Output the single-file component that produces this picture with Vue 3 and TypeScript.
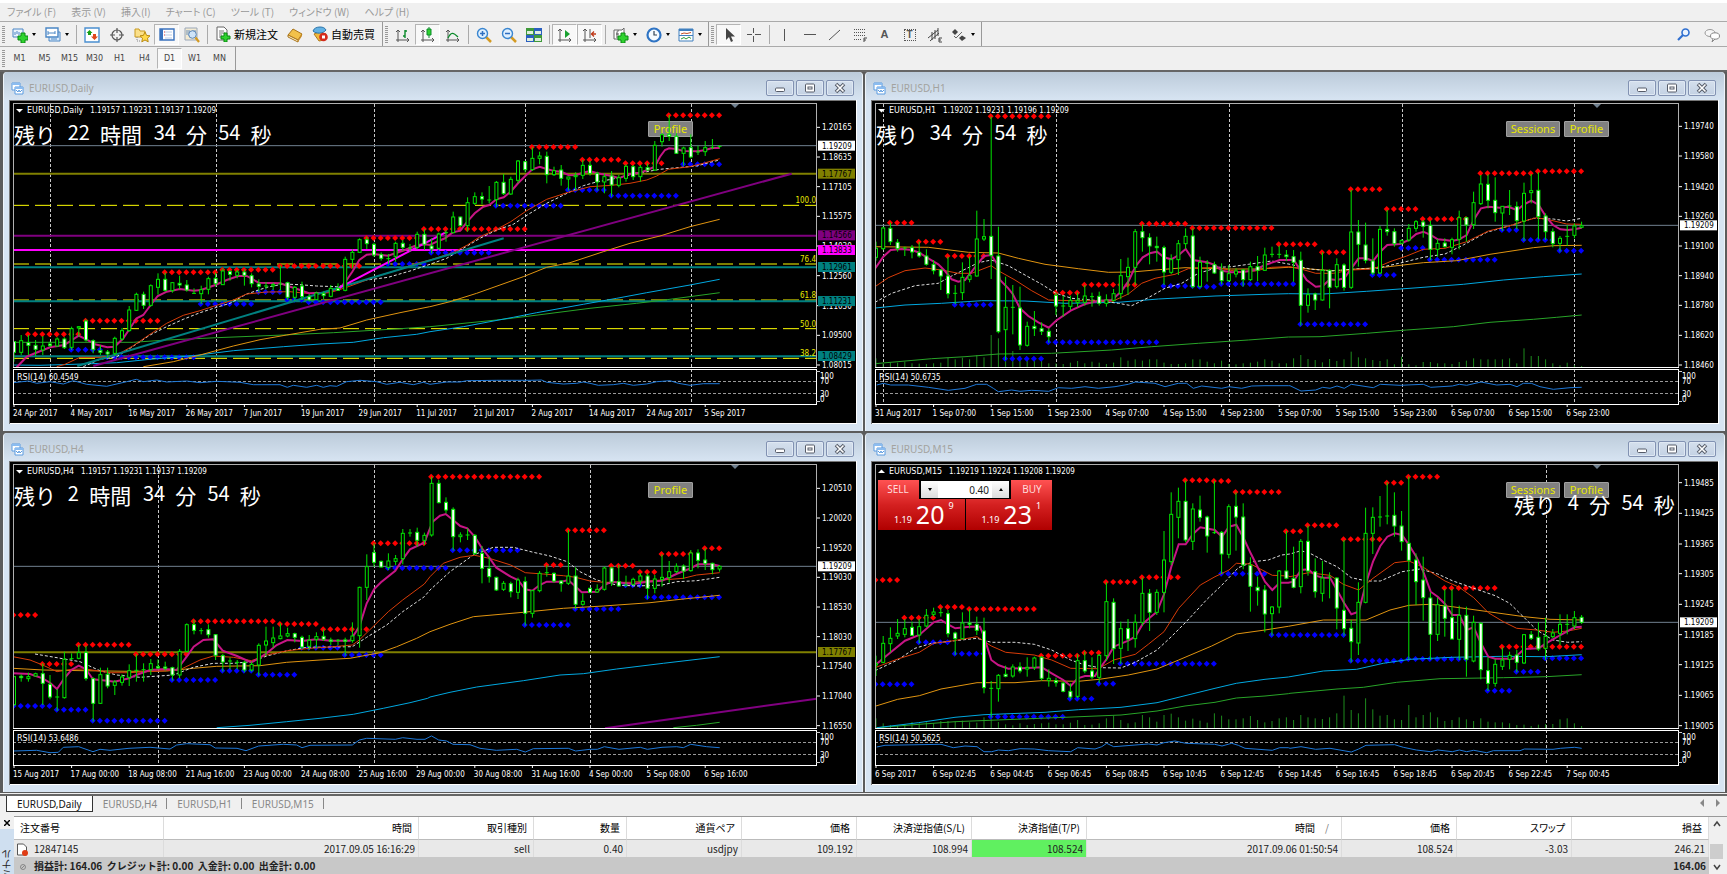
<script setup lang="ts">
type Pt = [number, number]
type Candle = { x: number; high: number; top: number; bottom: number; low: number; filled: boolean }
type Series = { kind: string; points: string }
type Level = { y: number; kind: string }
type Run = [number, number, number]

const LEFT = 14
const STEP = 7.2
const UNIT = 3

const candleX = (i: number): number => LEFT + i * STEP

/* Bars: "high,top,bottom,low", a trailing * marks a falling bar. Values are thirds of a unit below `base`. */
function bars(first: number, base: number, text: string): Candle[] {
  return text.trim().split(/\s+/).map((token, n) => {
    const [high, top, bottom, low] = token.replace('*', '').split(',').map((v) => base + Number(v) / UNIT)
    return { x: candleX(first + n), high, top, bottom, low, filled: token.endsWith('*') }
  })
}

/* A polyline made of pieces, each piece with its own origin. */
function path(kind: string, ...pieces: [number, number, string][]): Series {
  const pts: Pt[] = []
  for (const [ox, oy, text] of pieces) {
    for (const token of text.trim().split(/\s+/)) {
      const [x, y] = token.split(',').map(Number)
      const px = ox + x / UNIT
      if (pts.length && px <= pts[pts.length - 1][0]) continue
      pts.push([px, oy + y / UNIT])
    }
  }
  return { kind, points: pts.map(([x, y]) => `${x.toFixed(1)},${y.toFixed(1)}`).join(' ') }
}

function dots(runs: Run[], base: number): Pt[] {
  return runs.flatMap(([first, y, count]) =>
    Array.from({ length: count }, (_, n): Pt => [candleX(first + n) - 0.5, base + y / UNIT]))
}

function countdown(start: number, drop: number, words: string[]) {
  const EM = 21.5
  let x = start
  return words.map((word) => {
    const digits = /^\d+$/.test(word)
    const item = { word, digits, x, y: (digits ? 140 : 143) + drop }
    x += word.length * (digits ? EM / 2 : EM) + EM / 2
    return item
  })
}

const scale = (base: number, rows: [string, number][]) => rows.map(([label, y]) => ({ label, y: base + y / UNIT }))
const tags = (base: number, rows: [string, number, string][]) => rows.map(([label, y, kind]) => ({ label, kind, y: base + y / UNIT }))
const levels = (base: number, rows: [string, number][]): Level[] => rows.map(([kind, y]) => ({ kind, y: base + y / UNIT }))
const volumes = (base: number, text: string) => text.trim().split(',').map((v, i) => ({ x: candleX(i), y: base + Number(v) / UNIT }))
const hours = (text: string) => text.split('|')

const daily = {
  id: 'daily', title: 'EURUSD,Daily', quote: '1.19157 1.19231 1.19137 1.19209', rsi: '60.4549', panel: false,
  verticals: [50, 216, 374, 525, 691],
  levels: levels(70, [['price', 227], ['olive', 311], ['fib', 406], ['purple', 497], ['magenta', 540], ['fib', 582], ['teal', 592], ['fib', 690], ['teal', 694], ['fib', 776], ['teal', 859], ['fib', 865]]),
  fibs: scale(70, [['100.0', 391], ['76.4', 566], ['61.8', 674], ['50.0', 761], ['38.2', 849]]),
  scale: scale(70, [['1.20165', 172], ['1.18635', 261], ['1.17105', 350], ['1.15575', 439], ['1.14030', 528], ['1.12560', 617], ['1.11030', 707], ['1.09500', 796], ['1.08015', 885]]),
  tags: tags(70, [['1.19209', 227, 'white'], ['1.17767', 311, 'olive'], ['1.14566', 496, 'purple'], ['1.13833', 540, 'magenta'], ['1.12961', 591, 'teal'], ['1.11231', 693, 'teal'], ['1.08429', 858, 'teal']]),
  times: hours('24 Apr 2017|4 May 2017|16 May 2017|26 May 2017|7 Jun 2017|19 Jun 2017|29 Jun 2017|11 Jul 2017|21 Jul 2017|2 Aug 2017|14 Aug 2017|24 Aug 2017|5 Sep 2017'),
  countdown: countdown(14, 0, ['残り', '22', '時間', '34', '分', '54', '秒']),
  pills: [{ label: 'Profile', x: 648, width: 45 }],
  red: dots([[2, 793, 8], [10, 752, 11], [21, 607, 8], [29, 599, 8], [37, 588, 12], [49, 504, 8], [57, 477, 15], [72, 231, 7], [79, 269, 6], [85, 280, 6], [91, 136, 8]], 70),
  blue: dots([[8, 839, 5], [13, 862, 13], [26, 702, 8], [34, 666, 4], [38, 689, 3], [41, 697, 11], [52, 582, 6], [58, 548, 9], [67, 407, 10], [77, 360, 6], [83, 377, 10], [93, 283, 6]], 70),
  volumes: [] as { x: number; y: number }[],
  candles: [
    ...bars(0, 90, `755,755,787,815* 735,752,787,795 735,758,766,795* 750,766,778,798* 738,768,780,795 755,762,767,772* 742,747,768,770 742,747,773,777* 710,716,772,780 708,710,714,740 688,693,750,755* 748,752,778,790* 765,782,787,795* 780,786,792,803* 740,745,790,797 714,722,747,752 648,660,722,725 608,613,661,663 605,613,646,657* 583,587,646,650 550,568,592,614 548,568,601,605* 576,578,602,608 557,580,585,598* 570,585,600,605* 595,610,610,612 587,599,611,642 560,566,598,613 548,565,581,590* 535,543,584,585 540,545,553,572* 540,546,556,565 538,546,556,587* 550,557,581,592* 568,582,589,607* 576,588,588,598 578,584,588,600 527,582,582,600 575,578,622,630* 588,592,622,632 575,588,620,630* 612,620,630,635* 605,609,629,630 605,611,617,627* 585,595,619,622 580,595,601,603* 500,508,601,604 478,487,508,535 445,449,487,488 440,449,461,477* 458,463,495,500* 487,494,505,512* 492,506,506,523 455,460,499,515 450,460,472,483* 462,474,474,485 425,433,472,478 417,433,463,480*`),
    ...bars(58, 70, `505,528,537,550* 488,492,535,540 480,488,488,515 425,441,488,490 440,441,467,470* 382,398,467,485 367,380,400,405 367,380,387,403* 348,390,390,400 333,337,389,410 312,337,371,375* 320,328,372,375 270,273,331,340 273,275,299,307* 232,265,299,303 245,258,265,283 245,259,314,340* 290,302,314,318 285,300,325,347* 320,321,327,362 307,316,320,362 270,286,316,327 273,286,310,317* 305,310,336,362* 310,320,336,370 303,318,345,380* 315,323,346,352 283,289,325,335 285,290,320,330* 285,292,320,335 280,293,300,303* 213,226,300,303 190,194,215,230 135,193,199,213* 190,199,250,252* 230,234,250,287 193,233,261,265* 227,246,246,255 213,233,245,258 207,232,232,238 225,229,229,235`),
  ],
  series: [
    path('green', [0, 90, '40,757 400,757 500,750 650,743 850,735 1000,728 1200,716 1289,710'], [430, 70, '0,770 200,750 300,738 480,715 620,700 720,688 869,668']),
    path('sky', [0, 90, '40,825 120,826 250,822 350,818 450,808 580,797 700,782 850,770 960,762 1060,757 1150,743 1250,733'], [430, 70, '0,785 100,770 250,742 320,728 460,703 560,685 650,668 780,645 869,628']),
    path('orange', [0, 90, '430,830 520,815 600,795 700,768 780,749 860,735 960,718 1020,714 1100,690 1200,668 1289,650'], [430, 70, '0,710 60,695 140,670 280,620 350,592 420,578 520,545 600,520 690,498 780,470 869,448']),
    path('dash', [0, 90, '250,830 300,808 350,800 390,775 450,735 500,710 550,688 600,668 650,652 690,640 740,612 800,592 850,582 900,584 950,588 1010,590 1050,582 1100,570 1165,562 1230,543'], [430, 70, '0,583 50,565 100,535 150,505 200,480 250,463 300,430 350,400 415,368 460,347 502,335 545,328 600,315 650,305 690,298 740,293 800,288 840,277 869,270']),
    path('tomato', [0, 90, '170,830 195,823 240,802 300,802 350,795 400,767 450,733 500,700 550,676 600,662 650,646 700,630 740,612 800,606 870,605 930,611 990,608 1040,592 1100,570 1150,553 1200,538 1250,520'], [430, 70, '0,570 69,548 112,525 150,500 200,478 242,455 290,422 350,388 415,367 480,350 545,346 600,340 650,330 680,318 715,298 780,290 820,280 869,266']),
    path('pink', [0, 90, '50,832 80,800 105,790 150,772 193,765 236,737 262,750 285,763 322,772 344,770 370,745 390,715 410,685 430,675 452,645 473,618 500,605 540,597 581,602 603,600 646,585 680,570 715,558 740,558 776,578 841,580 862,587 900,600 927,610 970,608 1000,600 1020,595 1040,570 1057,545 1078,510 1100,494 1122,492 1143,495 1165,497 1190,488 1215,480 1251,465 1273,463'], [430, 70, '0,525 20,515 45,505 69,487 91,482 112,455 134,430 160,410 178,405 199,388 221,382 242,365 264,340 286,318 307,298 329,290 350,297 372,303 394,305 415,315 437,316 458,308 480,303 502,310 545,318 567,325 588,316 609,310 631,308 652,300 674,290 690,260 705,240 717,235 739,237 760,243 804,244 826,240 847,234 869,234']),
    path('trend-purple', [0, 70, '280,888 2375,311']),
    path('trend-teal', [0, 70, '232,888 1511,505']),
    path('trend-magenta', [0, 70, '1014,655 1337,487']),
  ],
  rsiLine: path('rsi', [0, 90, '40,878 85,873 110,880 150,875 190,882 220,872 260,883 320,889 380,875 409,868 430,875 470,870 500,876 560,873 600,878 650,874 720,877 760,884 840,884 862,892 880,886 920,892 950,886 970,892 990,887 1010,889 1040,875 1080,871 1130,875 1160,883 1200,877 1240,884 1270,877'], [430, 70, '0,943 50,936 90,936 110,932 200,931 300,931 335,930 350,937 400,942 440,940 460,936 480,940 505,946 550,944 580,940 610,946 650,942 680,935 720,932 745,940 780,946 820,941 869,941']),
}

const h1 = {
  id: 'h1', title: 'EURUSD,H1', quote: '1.19202 1.19231 1.19196 1.19209', rsi: '50.6735', panel: false,
  verticals: [21, 194, 367, 540, 712],
  levels: levels(70, [['price', 466]]),
  fibs: scale(70, []),
  scale: scale(70, [['1.19740', 169], ['1.19580', 258], ['1.19420', 350], ['1.19260', 439], ['1.19100', 528], ['1.18940', 617], ['1.18780', 706], ['1.18620', 796], ['1.18460', 885]]),
  tags: tags(70, [['1.19209', 466, 'white']]),
  times: hours('31 Aug 2017|1 Sep 07:00|1 Sep 15:00|1 Sep 23:00|4 Sep 07:00|4 Sep 15:00|4 Sep 23:00|5 Sep 07:00|5 Sep 15:00|5 Sep 23:00|6 Sep 07:00|6 Sep 15:00|6 Sep 23:00'),
  countdown: countdown(14, 0, ['残り', '34', '分', '54', '秒']),
  pills: [{ label: 'Sessions', x: 644, width: 54 }, { label: 'Profile', x: 702, width: 45 }],
  red: dots([[2, 458, 4], [6, 515, 4], [10, 558, 6], [16, 139, 9], [25, 668, 4], [29, 644, 8], [37, 461, 7], [44, 474, 12], [56, 523, 6], [62, 547, 4], [66, 358, 5], [71, 417, 5], [76, 447, 7], [84, 310, 8], [92, 304, 7]], 70),
  blue: dots([[11, 704, 6], [18, 866, 6], [24, 817, 16], [40, 648, 5], [45, 650, 3], [48, 642, 11], [59, 763, 10], [69, 615, 4], [73, 534, 4], [77, 569, 10], [87, 480, 3], [90, 510, 5], [95, 542, 4]], 70),
  volumes: volumes(70, '865,880,877,878,875,880,881,882,880,878,863,868,863,868,855,862,795,805,845,843,858,862,872,868,880,880,882,878,873,880,875,878,882,878,862,872,868,872,868,868,878,882,882,880,868,868,875,880,872,882,883,880,878,875,868,872,880,880,865,855,867,870,877,867,873,868,845,862,865,870,873,868,883,860,883,886,876,876,880,880,882,876,872,865,868,868,868,868,865,880,835,858,858,868,880,886,878,886,888'),
  candles: bars(0, 70, `515,535,562,572 470,474,536,540 458,475,515,525* 507,517,536,545* 530,534,534,558 525,533,546,565* 515,547,558,563* 538,558,583,587* 570,583,602,613* 597,600,618,660* 560,618,671,685* 645,670,670,703 577,622,668,690 560,617,628,637 422,507,618,620 447,500,507,513 140,499,556,627* 470,558,785,790* 620,712,779,870 645,712,712,793 650,714,825,840* 755,769,826,830 723,769,776,798* 757,776,784,795* 775,784,800,818* 668,676,708,735* 677,708,708,740 677,691,709,720 668,691,697,712 645,678,697,707 668,680,680,710 665,679,700,707* 673,690,700,710 657,671,691,695 567,617,671,688 563,592,620,675 477,485,592,645 463,485,503,545* 490,503,528,583* 500,529,533,575* 527,533,606,645* 553,569,607,612 510,521,569,615 475,499,521,537 475,498,650,655* 560,577,649,655 570,580,580,635 575,584,609,612* 580,603,632,643* 585,611,632,635 595,603,612,622 597,600,629,650* 575,590,629,633 558,590,601,633* 533,555,601,603 530,553,553,562 527,553,553,565 540,555,560,573* 540,560,577,635* 545,571,706,767* 655,674,706,728 668,672,690,720* 547,601,690,692 598,601,652,715* 565,584,650,655 580,585,652,662* 360,486,652,657 450,486,523,590* 458,525,571,580* 505,573,609,615* 468,478,609,612 420,478,485,497* 475,485,521,530* 508,512,520,523 462,475,510,515 450,455,475,485 450,456,469,503* 452,466,538,570* 507,520,538,560 505,519,530,533* 503,509,532,553 422,443,508,538 440,443,465,515* 365,398,464,477 315,342,401,405 313,343,391,415* 322,391,428,455* 408,409,429,483 360,408,408,435 395,410,452,478* 338,370,453,513 312,362,368,400 307,361,440,508* 430,438,485,510* 475,485,521,532* 498,505,520,545 465,499,499,528 460,468,496,505 455,467,472,475`),
  series: [
    path('green', [3, 70, '30,881 200,866 300,860 400,852 560,850 740,840 860,830 1000,820 1150,810 1270,801'], [428, 70, '0,801 90,800 230,790 350,780 490,770 600,757 730,748 800,742 875,735']),
    path('sky', [3, 70, '30,714 120,705 230,700 350,692 480,693 600,700 760,697 880,687 1050,678 1200,673 1270,671'], [428, 70, '0,671 100,672 230,664 360,655 520,643 640,630 760,620 875,612']),
    path('orange', [3, 70, '30,530 190,532 310,547 400,549 460,565 540,583 640,596 730,607 800,606 870,600 960,593 1100,597 1180,597 1270,592'], [428, 70, '0,592 60,597 130,602 200,597 280,592 400,578 500,572 600,553 730,533 790,527 875,526']),
    path('dash', [3, 70, '30,697 80,670 150,647 220,640 260,618 300,598 340,578 379,570 430,587 480,615 530,643 573,670 620,685 700,692 760,700 800,707 850,683 900,655 950,640 1000,610 1060,592 1100,590 1150,583 1220,573'], [428, 70, '0,583 60,597 120,603 200,597 260,595 340,577 400,562 465,552 520,525 590,487 660,467 730,445 790,447 830,453 875,445']),
    path('tomato', [3, 70, '30,650 70,623 120,602 180,594 230,600 280,610 320,610 379,587 400,602 450,630 500,662 551,690 620,692 680,692 740,695 790,672 830,640 870,625 930,613 970,596 1050,592 1120,605 1170,603 1220,592 1270,590'], [428, 70, '0,590 33,597 77,610 130,610 184,600 249,597 300,575 350,558 400,538 465,535 530,515 595,483 660,467 703,453 740,443 780,450 830,462 875,463']),
    path('pink', [3, 70, '30,596 55,560 77,540 110,537 141,540 163,548 190,565 220,583 240,603 260,628 280,635 300,630 320,605 335,585 357,558 379,555 395,580 405,630 430,655 443,672 465,715 490,738 520,757 551,773 573,752 617,722 660,702 703,692 740,690 768,665 790,635 811,590 833,562 854,550 876,545 897,562 919,568 941,555 962,537 984,570 1027,577 1049,585 1071,602 1100,607 1136,606 1170,600 1200,585 1244,570 1270,570'], [428, 70, '12,570 33,605 50,630 77,650 98,648 120,628 141,630 163,625 184,595 206,565 228,565 249,573 271,545 292,525 330,522 357,510 379,492 400,485 422,495 443,508 465,510 487,513 508,508 530,495 551,450 573,415 595,410 630,413 655,410 681,420 703,403 724,392 746,405 768,440 789,465 811,478 833,480 854,478 875,473']),
  ],
  rsiLine: path('rsi', [3, 70, '35,945 55,940 77,945 130,945 190,952 250,961 300,955 335,943 365,943 385,955 400,965 440,960 465,964 500,961 551,964 580,953 620,955 660,950 700,955 750,950 790,943 811,936 870,940 900,950 940,940 965,940 985,955 1010,948 1070,955 1092,950 1130,955 1160,948 1200,947 1270,947'], [428, 70, '0,947 33,963 77,960 98,952 120,955 141,948 163,955 184,943 250,953 271,943 330,946 400,943 422,952 487,948 508,943 530,946 573,936 620,945 660,943 681,950 700,940 724,940 750,950 790,958 840,953 875,952']),
}

const h4 = {
  id: 'h4', title: 'EURUSD,H4', quote: '1.19157 1.19231 1.19137 1.19209', rsi: '53.6486', panel: false,
  verticals: [158, 374, 590],
  levels: levels(69, [['price', 409], ['olive', 667]]),
  fibs: scale(69, []),
  scale: scale(69, [['1.20510', 175], ['1.20020', 264], ['1.19520', 353], ['1.19030', 442], ['1.18530', 531], ['1.18030', 620], ['1.17540', 709], ['1.17040', 798], ['1.16550', 887]]),
  tags: tags(69, [['1.19209', 409, 'white'], ['1.17767', 666, 'olive']]),
  times: hours('15 Aug 2017|17 Aug 00:00|18 Aug 08:00|21 Aug 16:00|23 Aug 00:00|24 Aug 08:00|25 Aug 16:00|29 Aug 00:00|30 Aug 08:00|31 Aug 16:00|4 Sep 00:00|5 Sep 08:00|6 Sep 16:00'),
  countdown: countdown(14, 0, ['残り', '2', '時間', '34', '分', '54', '秒']),
  pills: [{ label: 'Profile', x: 648, width: 45 }],
  red: dots([[0, 555, 4], [4, 702, 5], [9, 644, 8], [17, 673, 8], [25, 574, 12], [37, 582, 6], [43, 598, 7], [50, 340, 8], [58, 140, 16], [74, 405, 3], [77, 301, 6], [83, 407, 4], [87, 426, 3], [90, 372, 5], [96, 355, 3]], 69),
  blue: dots([[0, 828, 6], [6, 839, 5], [11, 872, 11], [22, 750, 7], [29, 722, 5], [34, 734, 6], [40, 653, 6], [46, 675, 6], [52, 414, 9], [61, 361, 10], [71, 585, 7], [78, 537, 7], [85, 466, 3], [88, 502, 11]], 69),
  volumes: [] as { x: number; y: number }[],
  candles: bars(0, 69, `738,740,824,828 733,739,743,755* 728,740,746,755 728,731,738,740 700,731,760,825* 735,763,801,808* 777,801,801,843 665,688,803,806 670,686,686,690 645,668,685,688 647,667,745,752* 742,746,820,875* 713,734,820,822 713,733,768,775* 750,756,766,795 733,741,757,767 703,722,742,768 673,721,721,755 700,719,719,755 687,701,719,735 688,710,714,718* 695,711,715,722* 710,713,735,752* 657,664,735,745 580,584,664,668 570,584,601,613* 594,602,602,613 583,599,614,623* 612,614,676,690* 672,677,696,725* 682,693,693,718 690,697,697,718 692,697,720,727* 695,703,720,725 640,646,705,737 590,633,645,678 590,624,638,653 580,618,626,628 593,611,618,622 608,611,622,637* 617,622,651,657* 615,631,649,660 607,620,628,655 598,619,628,633* 623,630,634,645* 627,631,631,645 623,630,634,677* 577,618,632,638 470,472,617,653 373,410,472,510 340,368,397,410* 392,394,411,413* 370,393,412,420 375,386,394,405 297,310,386,403 297,309,309,320 293,307,331,350* 308,316,331,345 140,160,315,320 150,160,218,220* 202,217,240,250* 232,238,320,362* 307,315,320,337 295,315,315,330 312,316,370,375* 348,370,415,460* 380,415,440,458* 440,442,480,483* 453,460,478,483 455,461,485,502* 443,450,487,507 440,455,550,587* 480,482,550,563 423,430,482,487 405,428,428,440 427,430,453,458* 450,453,461,485* 300,438,460,465 412,438,523,538* 490,514,523,527 473,475,487,490* 463,478,486,488 410,414,478,482 410,414,456,468* 405,455,468,470* 437,465,465,470 443,448,463,467 430,438,453,467 430,438,475,507* 435,447,475,490 373,442,448,470 393,425,443,458 400,409,425,430 403,408,423,447* 360,369,422,425 358,369,391,415* 355,390,401,420* 398,400,419,433* 405,409,417,425`),
  series: [
    path('trend-purple', [430, 69, '525,895 1160,806']),
    path('green', [430, 69, '730,893 800,886 869,877']),
    path('sky', [0, 69, '650,893 750,886 860,875 960,865 1060,853 1150,835 1230,818 1283,805'], [430, 69, '0,801 60,787 140,771 280,752 390,735 460,731 560,717 700,700 869,680']),
    path('orange', [0, 69, '39,715 130,720 250,722 387,724 500,723 580,715 650,709 780,707 860,697 960,690 1050,685 1140,668 1190,650 1250,625'], [430, 69, '0,605 60,583 130,560 280,547 400,535 520,528 660,518 760,507 869,496']),
    path('dash', [0, 69, '105,672 171,683 240,695 300,722 350,735 420,742 520,735 580,712 640,700 700,700 754,695 800,678 862,662 920,652 1057,650 1100,622 1160,585 1208,545 1273,500'], [430, 69, '0,480 60,425 130,375 190,352 250,352 310,367 360,378 412,395 450,425 500,450 560,465 620,468 696,465 740,455 800,452 869,442']),
    path('tomato', [0, 69, '39,680 90,690 128,705 171,725 214,718 257,717 330,728 387,728 480,723 538,720 600,690 640,678 700,682 754,692 800,675 862,662 930,655 1000,650 1057,645 1078,630 1122,587 1165,545 1208,510 1273,462'], [430, 69, '0,440 40,400 90,382 134,376 178,385 242,405 286,428 340,432 400,437 437,442 480,453 520,457 600,457 696,450 760,445 800,435 869,428']),
    path('pink', [0, 69, '39,730 90,732 128,745 150,758 171,777 193,745 214,720 236,707 257,717 279,748 322,752 344,755 387,745 409,735 450,720 495,717 530,720 560,680 581,650 610,630 640,628 668,662 711,678 754,697 776,685 800,670 830,645 862,630 906,633 949,628 992,632 1050,632 1078,590 1100,520 1122,478 1143,457 1186,422 1208,388 1230,358 1273,338'], [430, 69, '8,275 30,257 47,252 69,270 91,288 112,295 134,320 156,355 178,383 199,413 242,440 264,450 286,478 307,482 329,465 350,455 394,455 415,450 437,470 455,487 502,485 523,465 545,455 609,462 652,455 696,452 739,432 782,415 804,403 847,403 869,408']),
  ],
  rsiLine: path('rsi', [0, 69, '41,963 110,961 150,968 175,967 190,952 236,950 279,965 300,958 330,961 387,955 450,952 510,957 530,945 560,941 630,944 646,954 711,955 738,962 776,948 850,943 890,945 906,953 930,946 1057,945 1078,930 1100,925 1186,928 1208,923 1251,928 1275,928 1294,918'], [430, 69, '5,918 26,930 50,933 69,943 120,944 150,955 199,961 260,958 286,966 310,956 415,955 437,963 480,958 502,958 523,950 567,958 631,952 652,958 696,952 740,950 760,953 782,943 830,950 869,953']),
}

const m15 = {
  id: 'm15', title: 'EURUSD,M15', quote: '1.19219 1.19224 1.19208 1.19209', rsi: '50.5625', panel: true,
  verticals: [684],
  levels: levels(69, [['price', 577]]),
  fibs: scale(69, []),
  scale: scale(69, [['1.19485', 158], ['1.19425', 250], ['1.19365', 342], ['1.19305', 431], ['1.19245', 523], ['1.19185', 614], ['1.19125', 704], ['1.19065', 796], ['1.19005', 887]]),
  tags: tags(69, [['1.19209', 577, 'white']]),
  times: hours('6 Sep 2017|6 Sep 02:45|6 Sep 04:45|6 Sep 06:45|6 Sep 08:45|6 Sep 10:45|6 Sep 12:45|6 Sep 14:45|6 Sep 16:45|6 Sep 18:45|6 Sep 20:45|6 Sep 22:45|7 Sep 00:45'),
  countdown: countdown(652, 9, ['残り', '4', '分', '54', '秒']),
  pills: [{ label: 'Sessions', x: 644, width: 54 }, { label: 'Profile', x: 702, width: 45 }],
  red: dots([[0, 450, 4], [4, 563, 5], [9, 531, 4], [13, 537, 10], [23, 677, 6], [29, 668, 3], [32, 456, 5], [37, 442, 6], [43, 151, 4], [47, 153, 3], [50, 186, 7], [57, 304, 3], [60, 286, 5], [65, 328, 6], [71, 158, 3], [74, 140, 5], [79, 474, 8], [87, 650, 12]], 69),
  blue: dots([[0, 763, 6], [6, 637, 5], [11, 671, 5], [16, 860, 11], [27, 806, 4], [31, 761, 3], [34, 701, 14], [48, 431, 7], [55, 615, 11], [66, 692, 8], [74, 687, 9], [85, 782, 4], [89, 725, 4], [93, 685, 6]], 69),
  volumes: volumes(69, '865,880,885,887,882,876,880,877,880,873,873,875,872,877,878,862,847,876,883,886,880,885,882,880,878,883,883,878,870,885,884,880,865,857,870,880,877,855,862,875,855,851,862,872,866,872,878,850,857,868,868,865,858,870,877,873,865,862,870,855,862,865,867,862,850,797,840,850,805,838,857,855,868,870,825,862,855,847,862,873,870,862,868,873,865,875,877,877,880,885,884,888,884,882,882,868,865,880,888'),
  candles: bars(0, 69, `677,701,705,738 618,640,697,700 592,625,641,667 567,610,618,627 567,596,613,622 575,592,616,618* 567,590,615,640 537,556,588,592 533,546,553,560 533,548,548,560 540,551,611,622* 605,609,626,675* 547,579,626,628 537,579,583,595* 560,583,601,615* 563,603,773,790* 753,775,775,863 732,736,776,815 707,733,739,742* 703,711,738,743 697,711,723,730* 682,712,717,740 680,684,712,720 678,682,745,752* 718,745,751,770 743,752,758,770* 755,759,784,787* 760,784,801,808* 673,692,799,805 665,692,723,730* 682,723,741,747* 672,676,742,760 457,515,677,693 505,517,656,702* 575,596,655,702 567,596,627,663* 553,577,626,653 443,490,577,587 477,490,547,603* 478,487,547,555 303,390,487,547 187,253,395,405 173,214,262,325 152,214,330,337* 220,237,334,360 197,240,262,275* 257,261,318,368* 153,308,308,312 303,307,372,432* 223,230,373,385 187,229,261,362* 220,261,405,418* 382,406,469,545* 440,472,482,527* 465,480,552,607* 528,531,551,617 420,423,531,550 303,423,445,448* 350,445,472,475* 327,334,470,490 287,334,423,437* 385,425,485,503* 393,444,490,515 427,441,441,505 442,444,534,598* 330,541,596,617* 570,595,635,697* 457,517,639,675 233,310,517,520 232,262,310,372 198,261,261,290 157,258,258,283 187,256,288,320* 243,288,335,362* 140,340,391,688* 370,390,455,525* 380,450,503,572* 487,504,613,690* 503,524,613,633 477,528,565,620* 477,563,627,628* 527,556,628,690 530,556,688,740* 557,577,693,697 577,580,719,748* 682,722,760,783* 687,703,760,770 652,690,709,720 665,676,688,718 660,675,697,727* 612,614,699,702 603,614,625,630* 577,622,657,663* 563,619,655,690 597,609,620,625 553,583,610,645 553,583,583,613 543,563,588,597 555,562,577,582*`),
  series: [
    path('green', [3, 69, '35,893 163,883 270,875 450,868 600,862 768,855 876,843 960,828 1050,817 1114,804 1200,798 1270,791'], [428, 69, '0,790 141,777 220,772 320,757 450,746 640,743 768,740 875,734']),
    path('sky', [3, 69, '35,893 160,878 270,862 357,854 540,847 640,839 768,832 876,818 960,797 1050,775 1114,760 1200,748 1270,741'], [428, 69, '0,740 100,723 200,718 280,700 360,688 487,682 640,679 768,680 875,674']),
    path('orange', [3, 69, '30,829 98,808 163,797 228,777 336,758 450,758 530,752 640,754 703,748 790,735 876,717 941,690 1040,648 1114,612 1200,600 1270,589'], [428, 69, '0,588 100,570 228,570 300,540 357,526 420,523 487,530 595,545 703,560 780,568 875,570']),
    path('dash', [3, 69, '30,722 98,690 150,655 200,640 336,625 379,637 450,637 508,643 560,660 617,690 660,705 703,713 768,714 811,697 876,660 919,620 962,577 1027,507 1071,465 1120,413 1165,395 1210,390 1250,375'], [428, 69, '0,372 33,362 60,370 98,390 141,410 184,443 230,453 271,453 336,425 390,417 443,432 487,452 560,478 616,497 659,520 703,563 740,600 789,630 833,637 875,635']),
    path('tomato', [3, 69, '30,713 98,687 163,667 206,640 260,633 336,620 379,648 422,667 508,675 560,690 617,715 700,716 746,690 811,673 850,643 897,605 941,535 1006,465 1050,440 1092,420 1114,400 1157,402 1222,436 1270,438'], [428, 69, '0,440 55,428 120,436 160,463 206,480 249,445 314,398 357,393 400,412 465,453 508,472 551,503 595,548 640,575 680,595 740,600 789,607 833,603 875,595']),
    path('pink', [3, 69, '30,706 77,667 120,632 163,615 206,577 228,570 249,583 271,595 314,590 345,590 357,620 379,690 400,705 430,716 487,714 530,712 560,730 595,750 617,768 638,745 660,738 690,738 703,717 725,687 746,650 790,632 811,620 833,582 854,563 876,545 897,493 919,410 941,343 962,343 984,312 1006,292 1049,300 1071,320 1092,290 1114,284 1136,325 1157,370 1200,455 1222,480 1244,458 1270,458'], [428, 69, '10,455 33,420 55,418 77,437 98,443 120,443 141,480 163,520 184,553 206,545 228,460 249,395 271,348 292,320 314,310 336,315 357,345 379,380 400,425 422,485 443,500 465,522 487,555 508,555 530,600 551,592 573,640 595,680 616,686 670,686 703,657 746,655 768,640 789,628 811,615 854,592 875,590']),
  ],
  rsiLine: path('rsi', [3, 69, '35,951 60,946 228,943 265,953 300,948 336,950 357,965 380,965 400,960 430,962 465,956 508,957 551,962 617,965 638,953 690,957 710,950 725,940 746,950 850,942 876,945 897,938 930,933 962,940 1049,943 1071,948 1100,940 1120,946 1140,955 1222,961 1244,953 1270,953'], [428, 69, '0,955 33,950 77,958 120,955 184,966 206,957 228,946 314,944 340,952 379,960 422,965 443,960 487,965 508,960 530,965 551,961 590,968 610,962 690,962 703,957 789,958 811,955 854,952 875,955']),
}

const charts = [daily, h1, h4, m15]
const menus = ['ファイル (F)', '表示 (V)', '挿入(I)', 'チャート (C)', 'ツール (T)', 'ウィンドウ (W)', 'ヘルプ (H)']
const frames = ['M1', 'M5', 'M15', 'M30', 'H1', 'H4', 'D1', 'W1', 'MN']
const tabs = ['EURUSD,Daily', 'EURUSD,H4', 'EURUSD,H1', 'EURUSD,M15']

type Tool = { icon: string; name: string; kind?: 'menu' | 'on' | 'text' | 'letter' | 'sep' | 'end' }
const SEP: Tool = { icon: '', name: '', kind: 'sep' }
const END: Tool = { icon: '', name: '', kind: 'end' }
const tools: Tool[] = [
  { icon: 'new-chart', name: 'New chart', kind: 'menu' }, { icon: 'profiles', name: 'Profiles', kind: 'menu' }, SEP,
  { icon: 'market', name: 'Market watch' }, { icon: 'data', name: 'Data window' }, { icon: 'navigator', name: 'Navigator' },
  { icon: 'terminal', name: 'Terminal', kind: 'on' }, { icon: 'tester', name: 'Tester' }, SEP,
  { icon: 'order', name: '新規注文', kind: 'text' }, { icon: 'book', name: 'MetaEditor' }, { icon: 'auto', name: '自動売買', kind: 'text' }, END,
  { icon: 'bars', name: 'Bar chart' }, { icon: 'candles', name: 'Candlesticks', kind: 'on' }, { icon: 'line', name: 'Line chart' }, SEP,
  { icon: 'zoom-in', name: 'Zoom in' }, { icon: 'zoom-out', name: 'Zoom out' }, { icon: 'tile', name: 'Tile windows' }, SEP,
  { icon: 'scroll', name: 'Auto scroll', kind: 'on' }, { icon: 'shift', name: 'Chart shift', kind: 'on' }, SEP,
  { icon: 'indicators', name: 'Indicators', kind: 'menu' }, { icon: 'clock', name: 'Periods', kind: 'menu' }, { icon: 'template', name: 'Templates', kind: 'menu' }, END,
  { icon: 'cursor', name: 'Cursor', kind: 'on' }, { icon: 'cross', name: 'Crosshair' }, SEP,
  { icon: 'vline', name: 'Vertical line' }, { icon: 'hline', name: 'Horizontal line' }, { icon: 'trend', name: 'Trendline' },
  { icon: 'fibo', name: 'Fibonacci' }, { icon: 'plain', name: 'A', kind: 'letter' }, { icon: 'boxed', name: 'T', kind: 'letter' },
  { icon: 'channel', name: 'Channel' }, { icon: 'arrows', name: 'Arrows', kind: 'menu' },
]

const columns = [
  { head: '注文番号', value: '12847145', width: 150 },
  { head: '時間', value: '2017.09.05 16:16:29', width: 255 },
  { head: '取引種別', value: 'sell', width: 115 },
  { head: '数量', value: '0.40', width: 93 },
  { head: '通貨ペア', value: 'usdjpy', width: 115 },
  { head: '価格', value: '109.192', width: 115 },
  { head: '決済逆指値(S/L)', value: '108.994', width: 115 },
  { head: '決済指値(T/P)', value: '108.524', width: 115 },
  { head: '時間', value: '2017.09.06 01:50:54', width: 255 },
  { head: '価格', value: '108.524', width: 115 },
  { head: 'スワップ', value: '-3.03', width: 115 },
  { head: '損益', value: '246.21', width: 137 },
]
</script>

<template>
  <div class="app">
    <svg class="symbols" aria-hidden="true">
      <symbol id="i-new-chart" viewBox="0 0 16 16">
        <path d="M1 2h10v8H1z" fill="#eaf3fc" stroke="#4a86c5" /><path d="M3 5v3M5 4v3M7 5v3" stroke="#4a86c5" />
        <path d="M9 6h4v3h3v4h-3v3H9v-3H6V9h3z" fill="#2fd32f" stroke="#0b8a12" />
      </symbol>
      <symbol id="i-profiles" viewBox="0 0 16 16">
        <path d="M4 5h11v9H4z" fill="#dcebfa" stroke="#4a86c5" /><path d="M1 1h12v9H1z" fill="#fff" stroke="#4a86c5" stroke-width="1.4" />
        <path d="M3 4v4M3 6h7M10 4v3M6 12h6" stroke="#4a86c5" />
      </symbol>
      <symbol id="i-market" viewBox="0 0 16 16">
        <path d="M1 1h14v14H1z" fill="#fff" stroke="#4a8fd0" stroke-width="1.4" /><path d="M5.500 3l3 3H7v2H4V6H2.500z" fill="#16a016" />
        <path d="M9 7h3v2.500h2L10.500 13 7 9.500h2z" fill="#e0481c" />
      </symbol>
      <symbol id="i-data" viewBox="0 0 16 16"><circle cx="8" cy="8" r="5" fill="none" stroke="#555" stroke-width="1.2" /><path d="M8 1v5M8 10v5M1 8h5M10 8h5" stroke="#555" stroke-width="1.2" /></symbol>
      <symbol id="i-navigator" viewBox="0 0 16 16">
        <path d="M1 2h4l1 2h5v6H1z" fill="#fbe08a" stroke="#c89a20" /><path d="M3 10v4h3" stroke="#888" stroke-dasharray="1 1" fill="none" />
        <path d="M11 5l1.600 3.400 3.400.4-2.500 2.400.7 3.600L11 13l-3.200 1.800.7-3.600L6 8.800l3.400-.4z" fill="#ffd94a" stroke="#b98a10" />
      </symbol>
      <symbol id="i-terminal" viewBox="0 0 16 16"><path d="M1 2h14v11H1z" fill="#fff" stroke="#3a72bd" stroke-width="1.4" /><path d="M1 2h3v11H1z" fill="#3a72bd" /><path d="M6 5h7M6 8h7M6 11h7" stroke="#b8cbe6" /><path d="M5 5h1M5 8h1" stroke="#d33" /></symbol>
      <symbol id="i-tester" viewBox="0 0 16 16"><path d="M1 1h12v12H1z" fill="#f3ead2" stroke="#9aa7b8" /><path d="M3 3v5M5 3v6M9 3v4M11 3v5" stroke="#6b8fbb" /><circle cx="8.500" cy="7.500" r="3.800" fill="#cfe4f8" stroke="#5a86b8" /><path d="M11.500 10.500L15 15" stroke="#d49a22" stroke-width="2.200" /></symbol>
      <symbol id="i-order" viewBox="0 0 16 16"><path d="M2 1h7l3 3v10H2z" fill="#fff" stroke="#666" /><path d="M4 5h5M4 7h6M4 9h3M4 11h2" stroke="#777" /><path d="M9 7h3v3h3v3h-3v3H9v-3H6v-3h3z" fill="#2fd32f" stroke="#0b8a12" /></symbol>
      <symbol id="i-book" viewBox="0 0 16 16"><path d="M1 8l5-6 9 5-4 6z" fill="#f2c14a" stroke="#a9741a" /><path d="M1 8v2l10 5v-2z" fill="#fff3cf" stroke="#a9741a" /><path d="M11 13v2l4-6V7z" fill="#c98a24" /></symbol>
      <symbol id="i-auto" viewBox="0 0 16 16"><path d="M2 8l5-2 7 2-2 6-5 1z" fill="#f2b93c" stroke="#b07a1a" /><path d="M1 5c1-3 4-4 7-4s5 1 6 3c-3 4-10 4-13 1z" fill="#63b2e4" stroke="#2b74aa" /><circle cx="11.500" cy="11" r="4.300" fill="#d42a1c" /><path d="M10 9.500h3v3h-3z" fill="#fff" /></symbol>
      <symbol id="i-bars" viewBox="0 0 16 16"><path d="M3 3v12M1 13h13M1 5l2-2 2 2M12 11l2 2-2 2" fill="none" stroke="#555" /><path d="M10 3v8M8 9h2M10 4h2" stroke="#0a8a2a" stroke-width="1.400" fill="none" /></symbol>
      <symbol id="i-candles" viewBox="0 0 16 16"><path d="M3 3v12M1 13h13M1 5l2-2 2 2M12 11l2 2-2 2" fill="none" stroke="#555" /><path d="M9 0v11" stroke="#0a8a2a" /><path d="M7 2h4v6H7z" fill="#2fd32f" stroke="#0a8a2a" /></symbol>
      <symbol id="i-line" viewBox="0 0 16 16"><path d="M3 3v12M1 13h13M1 5l2-2 2 2M12 11l2 2-2 2" fill="none" stroke="#555" /><path d="M3 11c3-6 5-6 10-1" fill="none" stroke="#0a8a2a" stroke-width="1.300" /></symbol>
      <symbol id="i-zoom-in" viewBox="0 0 16 16"><path d="M10 10l5 5" stroke="#d49a22" stroke-width="2.500" /><circle cx="6.500" cy="6.500" r="5" fill="#dff0ff" stroke="#3a86d0" stroke-width="1.400" /><path d="M4 6.500h5M6.500 4v5" stroke="#2f6fc0" stroke-width="1.500" /></symbol>
      <symbol id="i-zoom-out" viewBox="0 0 16 16"><path d="M10 10l5 5" stroke="#d49a22" stroke-width="2.500" /><circle cx="6.500" cy="6.500" r="5" fill="#dff0ff" stroke="#3a86d0" stroke-width="1.400" /><path d="M4 6.500h5" stroke="#2f6fc0" stroke-width="1.500" /></symbol>
      <symbol id="i-tile" viewBox="0 0 16 16"><path d="M0 1h8v7H0zM8 8h8v7H8z" fill="#3f9a3a" /><path d="M8 1h8v7H8zM0 8h8v7H0z" fill="#2a5fc0" /><path d="M1 4h6v3H1zM9 4h6v3H9zM1 11h6v3H1zM9 11h6v3H9z" fill="#dfeedf" /></symbol>
      <symbol id="i-scroll" viewBox="0 0 16 16"><path d="M3 2v13M1 13h13M1 4l2-2 2 2M12 11l2 2-2 2" fill="none" stroke="#555" /><path d="M8 3l5 4-5 4z" fill="#18a030" /></symbol>
      <symbol id="i-shift" viewBox="0 0 16 16"><path d="M3 2v13M1 13h13M1 4l2-2 2 2M12 11l2 2-2 2M8 2v9" fill="none" stroke="#555" /><path d="M9 7h5M12 4.500L9.500 7l2.500 2.500" stroke="#c03a1a" stroke-width="1.300" fill="none" /></symbol>
      <symbol id="i-indicators" viewBox="0 0 16 16"><path d="M1 3h8l2-2v11H1z" fill="#fff" stroke="#666" /><path d="M4 11V5c0-1 1-1.500 2-1M3 7h3" stroke="#555" fill="none" /><path d="M8 6h4v3h3v4h-3v3H8v-3H5V9h3z" fill="#2fd32f" stroke="#0b8a12" /></symbol>
      <symbol id="i-clock" viewBox="0 0 16 16"><circle cx="8" cy="8" r="6.500" fill="#f6fbff" stroke="#2f74c4" stroke-width="2.200" /><path d="M8 4v4h3" stroke="#345" fill="none" stroke-width="1.200" /></symbol>
      <symbol id="i-template" viewBox="0 0 16 16"><path d="M1 2h14v12H1z" fill="#fff" stroke="#3f7fbe" /><path d="M1 2h14v2H1zM1 8h14v1H1z" fill="#3f7fbe" /><path d="M3 7l3-1 3 .5 4-1" stroke="#c0502a" fill="none" /><path d="M3 12l3-1.500 2 1.500 3-2 2 1.500" stroke="#2a9a3a" fill="none" /></symbol>
      <symbol id="i-cursor" viewBox="0 0 16 16"><path d="M5 1v12l3-3 2 5 2-1-2-4.500h4z" fill="#444" /></symbol>
      <symbol id="i-cross" viewBox="0 0 16 16"><path d="M7.500 1v5M7.500 9v6M1 7.500h5M9 7.500h6" stroke="#555" /></symbol>
      <symbol id="i-vline" viewBox="0 0 16 16"><path d="M7.500 2v12" stroke="#555" /></symbol>
      <symbol id="i-hline" viewBox="0 0 16 16"><path d="M2 7.500h12" stroke="#555" /></symbol>
      <symbol id="i-trend" viewBox="0 0 16 16"><path d="M2 13L13 3" stroke="#555" /></symbol>
      <symbol id="i-fibo" viewBox="0 0 16 16"><path d="M2 2.500h12M2 5.500h12M2 8.500h12M2 12.500h8" stroke="#555" stroke-dasharray="1 1" /><path d="M12 15v-4h3M12 13h2" stroke="#444" fill="none" /></symbol>
      <symbol id="i-channel" viewBox="0 0 16 16"><path d="M1 11L11 3M3 14l9-8M5 5v8M8 3v9M11 1v8" stroke="#444" /><path d="M15 11h-3v4h3M12 13h2" stroke="#444" fill="none" /></symbol>
      <symbol id="i-arrows" viewBox="0 0 16 16"><path d="M4 2l3 3-3 3-3-3z" fill="#444" /><path d="M3 9l2 2 6-6" stroke="#666" fill="none" /><path d="M11 8.500l4 2.500-4 3-3-3z" fill="#444" /></symbol>
      <symbol id="i-chart" viewBox="0 0 13 13"><path d="M1 1h8v7H1z" fill="#fff" stroke="#5b9be0" /><path d="M1 1h8v2H1z" fill="#8bbcf0" /><path d="M4 5h8v7H4z" fill="#fff" stroke="#5b9be0" /><path d="M4 5h8v2H4z" fill="#8bbcf0" /><path d="M5 8l2 2 1-2 1 2 2-2" stroke="#5b9be0" fill="none" /></symbol>
    </svg>

    <header class="chrome">
      <nav class="menubar" aria-label="Main menu">
        <button v-for="menu in menus" :key="menu" type="button">{{ menu }}</button>
      </nav>
      <div class="toolbar" role="toolbar" aria-label="Standard">
        <i class="grip"></i>
        <template v-for="(tool, n) in tools" :key="n">
          <i v-if="tool.kind === 'sep'" class="sep"></i>
          <template v-else-if="tool.kind === 'end'"><i class="section-end"></i><i class="grip"></i></template>
          <button v-else-if="tool.kind === 'letter'" type="button" class="tool letter"><span :class="tool.icon">{{ tool.name }}</span></button>
          <button v-else type="button" class="tool" :class="tool.kind" :aria-label="tool.name">
            <svg class="icon"><use :href="'#i-' + tool.icon" /></svg>
            <span v-if="tool.kind === 'text'">{{ tool.name }}</span>
            <i v-if="tool.kind === 'menu'" class="caret"></i>
          </button>
        </template>
        <i class="section-end"></i>
        <button type="button" class="tool search" aria-label="Search">
          <svg class="icon" viewBox="0 0 16 16"><circle cx="9.500" cy="5.500" r="3.500" fill="#eaf3ff" stroke="#2f6fd0" stroke-width="1.600" /><path d="M7 8l-5 5" stroke="#2f6fd0" stroke-width="2.200" /></svg>
        </button>
        <button type="button" class="tool chat" aria-label="Messages">
          <svg class="icon" viewBox="0 0 16 16"><ellipse cx="6" cy="6" rx="5" ry="3.500" fill="#f6f6f6" stroke="#999" /><ellipse cx="11" cy="9" rx="4.500" ry="3.200" fill="#fff" stroke="#888" /><path d="M9 12l-1 3 3-3" fill="#fff" stroke="#888" /></svg>
        </button>
      </div>
      <div class="toolbar frames" role="toolbar" aria-label="Timeframes">
        <i class="grip"></i>
        <button v-for="frame in frames" :key="frame" type="button" class="tool" :class="{ on: frame === 'D1' }">{{ frame }}</button>
        <i class="section-end"></i>
      </div>
    </header>

    <main class="desktop">
      <section v-for="chart in charts" :key="chart.id" class="window" :aria-label="chart.title">
        <header class="titlebar">
          <svg class="title-icon"><use href="#i-chart" /></svg>
          <h2>{{ chart.title }}</h2>
          <button type="button" aria-label="Minimize"><svg viewBox="0 0 12 12"><rect x="1.500" y="6" width="9" height="3.500" rx="1" fill="#fff" stroke="#555b68" /></svg></button>
          <button type="button" aria-label="Restore"><svg viewBox="0 0 12 12"><rect x="1.500" y="2" width="9" height="8" rx="1" fill="#fff" stroke="#555b68" /><rect x="4" y="5" width="4" height="2" fill="#fff" stroke="#555b68" /></svg></button>
          <button type="button" aria-label="Close"><svg viewBox="0 0 12 12"><path d="M2 2l8 8M10 2l-8 8" stroke="#555b68" stroke-width="3.600" /><path d="M2.500 2.500l7 7M9.500 2.500l-7 7" stroke="#fff" stroke-width="1.600" /></svg></button>
        </header>
        <svg class="chart" viewBox="10 101 846 322">
          <defs><clipPath :id="'plot-' + chart.id"><rect x="13" y="103" width="804" height="264" /></clipPath></defs>
          <rect x="10" y="101" width="846" height="322" fill="#000" />
          <g class="grid">
            <line v-for="x in chart.verticals" :key="x" :x1="x + 0.5" :x2="x + 0.5" y1="104" y2="403" />
            <line class="bound" x1="13" x2="817" y1="381.500" y2="381.500" /><line class="bound" x1="13" x2="817" y1="393.500" y2="393.500" />
          </g>
          <foreignObject v-for="pill in chart.pills" :key="pill.label" :x="pill.x" y="121" :width="pill.width" height="16">
            <button type="button" class="pill">{{ pill.label }}</button>
          </foreignObject>
          <g :clip-path="`url(#plot-${chart.id})`">
            <line v-for="(v, n) in chart.volumes" :key="n" :x1="v.x" :x2="v.x" :y1="v.y" y2="367" class="volume" />
            <line v-for="(level, n) in chart.levels" :key="n" x1="13" x2="817" :y1="level.y" :y2="level.y" :class="['level', level.kind]" />
            <path v-for="([x, y], n) in chart.red" :key="n" :d="`M${x - 3} ${y}l3 -3l3 3l-3 3z`" fill="#f00" />
            <path v-for="([x, y], n) in chart.blue" :key="n" :d="`M${x - 3} ${y}l3 -3l3 3l-3 3z`" fill="#00f" />
            <polyline v-for="line in chart.series" :key="line.kind" :points="line.points" :class="['series', line.kind]" />
            <g class="candles">
              <template v-for="(c, n) in chart.candles" :key="n">
                <line :x1="c.x" :x2="c.x" :y1="c.high" :y2="c.low" />
                <line v-if="c.top === c.bottom" :x1="c.x - 2" :x2="c.x + 2" :y1="c.top" :y2="c.top" />
                <rect v-else :x="c.x - 1.5" :y="c.top" width="3" :height="c.bottom - c.top" :class="{ filled: c.filled }" />
              </template>
            </g>
          </g>
          <polyline :points="chart.rsiLine.points" class="series rsi" />
          <g class="frame">
            <path d="M13 103.500H817M13.500 103V367.500M816.500 103V367.500" stroke="#b0b0b0" />
            <path d="M13 367.500H817M13 369.500H817M13.500 369V404.500M816.500 369V404.500M13 404.500H817" stroke="#fff" />
            <path d="M816 371.500h4M816 401.500h4" stroke="#ccc" />
          </g>
          <path d="M731 104h8l-4 4z" fill="#708090" />
          <text v-for="fib in chart.fibs" :key="fib.label" x="816" :y="fib.y + 3" class="fib-label">{{ fib.label }}</text>
          <g class="axis">
            <template v-for="row in chart.scale" :key="row.label">
              <line x1="817" x2="820" :y1="row.y" :y2="row.y" />
              <text x="822" :y="row.y + 3">{{ row.label }}</text>
            </template>
            <template v-for="(label, n) in chart.times" :key="label">
              <line :x1="candleX(n * 8)" :x2="candleX(n * 8)" y1="404" y2="407" />
              <text :x="13 + n * 8 * STEP" y="416">{{ label }}</text>
            </template>
            <text x="820" y="379">100</text><text x="820" y="384">70</text><text x="820" y="397">30</text><text x="820" y="402">0</text>
            <text x="17" y="380"><tspan class="wide">RSI(14)</tspan> {{ chart.rsi }}</text>
            <text x="27" y="113"><tspan class="wide">{{ chart.title }}</tspan>&nbsp;&nbsp;&nbsp;{{ chart.quote }}</text>
          </g>
          <path :d="chart.panel ? 'M16 112h7l-3.500 -3.500z' : 'M16 109h7l-3.500 3.500z'" fill="#fff" />
          <g v-for="tag in chart.tags" :key="tag.label" :class="['tag', tag.kind]">
            <rect x="818" :y="tag.y - 5" width="37" height="10" />
            <text x="822" :y="tag.y + 3">{{ tag.label }}</text>
          </g>
          <text v-for="item in chart.countdown" :key="item.x" :x="item.x" :y="item.y" :class="['countdown', { digits: item.digits }]">{{ item.word }}</text>
          <foreignObject v-if="chart.panel" x="16" y="119" width="174" height="50">
            <div class="deal">
              <button type="button"><span class="side">SELL</span><span class="quote"><small>1.19</small><b>20</b><sup>9</sup></span></button>
              <button type="button" class="buy"><span class="side">BUY</span><span class="quote"><small>1.19</small><b>23</b><sup>1</sup></span></button>
              <div class="lots">
                <button type="button" aria-label="Decrease volume"><i class="caret"></i></button>
                <input type="text" value="0.40" aria-label="Volume" />
                <button type="button" aria-label="Increase volume"><i class="caret up"></i></button>
              </div>
            </div>
          </foreignObject>
        </svg>
      </section>
    </main>

    <nav class="tabs" aria-label="Charts">
      <button v-for="(tab, n) in tabs" :key="tab" type="button" :class="{ active: n === 0 }">{{ tab }}</button>
      <span class="tab-scroll">
        <button type="button" aria-label="Scroll left"><svg viewBox="0 0 6 8"><path d="M5 0v8L1 4z" fill="#888" /></svg></button>
        <button type="button" aria-label="Scroll right"><svg viewBox="0 0 6 8"><path d="M1 0v8l4-4z" fill="#888" /></svg></button>
      </span>
    </nav>

    <section class="terminal" aria-label="ターミナル">
      <div class="dock">
        <button type="button" aria-label="Close"><svg viewBox="0 0 6 6"><path d="M0 0l6 6M6 0L0 6" stroke="#000" stroke-width="1.500" /></svg></button>
        <div class="dock-label"><span>ターミナル</span></div>
      </div>
      <div class="history">
        <table>
          <colgroup><col v-for="(col, n) in columns" :key="n" :width="col.width" /></colgroup>
          <thead>
            <tr><th v-for="(col, n) in columns" :key="n" scope="col">{{ col.head }}<span v-if="n === 8" class="sort">/</span></th></tr>
          </thead>
          <tbody>
            <tr>
              <td v-for="(col, n) in columns" :key="n" :class="{ profit: n === 7 }">
                <svg v-if="n === 0" viewBox="0 0 13 13" class="deal-icon"><path d="M1.500 1h6l3 3v8h-9z" fill="#fff" stroke="#555" /><circle cx="9" cy="10" r="3" fill="#e03c14" /></svg>{{ col.value }}
              </td>
            </tr>
            <tr class="total">
              <td colspan="11"><svg viewBox="0 0 13 13" class="deal-icon"><circle cx="7" cy="7" r="2.500" fill="none" stroke="#888" /><path d="M5 9l4-4" stroke="#888" /></svg>損益計: 164.06&nbsp; クレジット計: 0.00&nbsp; 入金計: 0.00&nbsp; 出金計: 0.00</td>
              <td>164.06</td>
            </tr>
          </tbody>
        </table>
        <div class="scrollbar">
          <button type="button" aria-label="Scroll up"><svg viewBox="0 0 8 8"><path d="M1 6l3-4 3 4" fill="none" stroke="#444" stroke-width="1.500" /></svg></button>
          <i class="thumb"></i>
          <button type="button" aria-label="Scroll down"><svg viewBox="0 0 8 8"><path d="M1 2l3 4 3-4" fill="none" stroke="#444" stroke-width="1.500" /></svg></button>
        </div>
      </div>
    </section>
  </div>
</template>

<style>
body { margin: 0; background: #f0f0f0; }
</style>

<style scoped>
.app { min-height: 100vh; display: flex; flex-direction: column; background: #f0f0f0; color: #222; font: 10px/14px "Noto Sans", "Noto Sans CJK JP", sans-serif; }
.app * { box-sizing: border-box; }
button { font: inherit; color: inherit; background: none; border: 0; padding: 0; margin: 0; }
.symbols { position: absolute; width: 0; height: 0; }

.chrome { border-top: 3px solid #fff; border-bottom: 2px solid #666; }
.menubar { display: flex; gap: 15px; height: 18px; padding-left: 7px; color: #999; font-family: "Noto Sans CJK JP", sans-serif; font-feature-settings: "palt"; }
.menubar button { white-space: nowrap; }
.toolbar { display: flex; align-items: stretch; height: 25px; padding: 2px 0 1px; border-top: 1px solid #aaa; }
.frames { height: 24px; padding-top: 1px; font: 8px/12px "DejaVu Sans", sans-serif; color: #444; }
.grip { width: 3px; margin: 2px 2px 2px 2px; background: repeating-linear-gradient(#999 0 1px, #f0f0f0 1px 2px); }
.sep { width: 1px; margin: 1px 2px 1px 3px; background: #aaa; }
.section-end { width: 1px; margin: -2px 0 -1px 3px; background: #999; }
.tool { width: 25px; display: flex; align-items: center; justify-content: center; flex: none; }
.tool.menu { width: 33px; gap: 4px; }
.tool.menu:has(+ .section-end) { width: 31px; }
.tool.text { width: auto; gap: 3px; padding: 0 4px 2px 5px; font: 11px/14px "Noto Sans CJK JP", sans-serif; color: #000; }
.tool.on { background: #f8f8f8; border: 1px solid #b4b4b4; border-right-color: #fff; border-bottom-color: #fff; }
.tool.letter { font: bold 11px/11px "Liberation Sans", sans-serif; color: #555; }
.letter .boxed { width: 12px; height: 12px; border: 1px dotted #555; font-size: 10px; line-height: 10px; }
.tool.search { margin-left: auto; margin-right: 3px; }
.tool.chat { margin-right: 3px; }
.icon { width: 16px; height: 16px; display: block; }
.caret { width: 0; height: 0; border: 2px solid transparent; border-top: 3px solid #000; border-bottom: 0; }
.caret.up { border-top: 0; border-bottom: 3px solid #000; }

.desktop { display: grid; grid-template-columns: 1fr 1fr; gap: 2px; padding: 0 2px 1px 3px; background: #5c5c5c; }
.window { padding: 0 6px 7px; background: #d7e4f2; border-radius: 4px 4px 0 0; border-left: 1px solid #eef4fa; border-right: 1px solid #eef4fa; min-width: 0; }
.titlebar { display: flex; align-items: center; gap: 2px; height: 28px; margin: 0 -6px; padding: 4px 8px 0 7px; background: linear-gradient(#bccbda, #d7e4f2); border-radius: 4px 4px 0 0; }
.titlebar h2 { flex: 1; margin: 0 0 0 3px; font: 10px/14px "Noto Sans", sans-serif; color: #a3a39f; }
.title-icon { width: 13px; height: 13px; }
.titlebar button { width: 28px; height: 16px; border: 1px solid #8292b2; border-radius: 2px; background: linear-gradient(#d5e0ed, #c3d1e3); box-shadow: inset 0 0 0 1px #dfe8f3; display: flex; align-items: center; justify-content: center; }
.titlebar button svg { width: 12px; height: 12px; }
.chart { display: block; width: 100%; height: auto; border-top: 1px solid #777; border-bottom: 1px solid #fff; box-shadow: 1px 0 #fff, -1px 0 #777; }

.grid line { stroke: #c8c8c8; stroke-dasharray: 3 2; }
.grid .bound { stroke: #999; }
.level.price { stroke: #708090; }
.level.olive { stroke: #808000; stroke-width: 2; }
.level.purple { stroke: #800080; stroke-width: 2; }
.level.magenta { stroke: #f0f; stroke-width: 2; }
.level.teal { stroke: #008080; stroke-width: 2; }
.level.fib { stroke: #ff0; stroke-dasharray: 16 6; }
.series { fill: none; stroke-width: 1; }
.pink { stroke: #c71585; stroke-width: 2; }
.tomato { stroke: #d83c08; }
.dash { stroke: #ddd; stroke-dasharray: 3 2; }
.orange { stroke: #e09410; }
.sky { stroke: #00a8e0; }
.green { stroke: #28a428; }
.rsi { stroke: #1e78d8; }
.trend-purple { stroke: #800080; stroke-width: 2; }
.trend-teal { stroke: #008080; stroke-width: 2; }
.trend-magenta { stroke: #f0f; stroke-width: 2; }
.volume { stroke: #1d8a1d; }
.candles { stroke: #00e400; fill: #000; }
.candles .filled { fill: #fff; }
.frame { fill: none; }
.axis { fill: #fff; font: 8px "DejaVu Sans Condensed", "Noto Sans", sans-serif; }
.axis .wide { font-family: "DejaVu Sans", sans-serif; }
.axis line { stroke: #fff; }
.fib-label { fill: #e8e800; text-anchor: end; font: 8px "DejaVu Sans Condensed", "Noto Sans", sans-serif; }
.tag { font: 8px "DejaVu Sans Condensed", "Noto Sans", sans-serif; fill: #000; }
.tag rect { fill: #fff; }
.tag.olive rect { fill: #808000; }
.tag.purple rect { fill: #800080; }
.tag.magenta rect { fill: #f0f; }
.tag.teal rect { fill: #008080; }
.countdown { fill: #fff; font: 21px "Noto Sans CJK JP", sans-serif; }
.countdown.digits { font-size: 20px; }
.pill { display: block; width: 100%; height: 16px; font: 11px/12px "Noto Sans", sans-serif; color: #e8e800; background: #808080; border: 1px solid #a0a0a0; border-radius: 1px; text-align: center; }

.deal { position: relative; display: grid; grid-template-columns: 1fr 1fr; gap: 1px; height: 50px; color: #fff; font: 10px/18px "Noto Sans", sans-serif; }
.deal > button { position: relative; display: flex; flex-direction: column; background: linear-gradient(#ff5252, #d42020 50%, #b00000); }
.side { width: 40px; text-align: center; color: #ffdcdc; height: 19px; }
.buy .side { align-self: flex-end; }
.quote { display: flex; height: 30px; padding-left: 16px; gap: 4px; }
.quote small { font-size: 9px; line-height: 42px; }
.quote b { font-weight: 400; font-size: 25px; line-height: 31px; }
.quote sup { font-size: 9px; line-height: 14px; }
.lots { position: absolute; top: 0; left: 41px; right: 41px; height: 19px; display: flex; padding: 1px 2px; background: #000; }
.lots button { width: 17px; background: linear-gradient(#fff, #dcdcdc); display: flex; align-items: center; justify-content: center; }
.lots input { flex: 1; min-width: 0; border: 0; border-radius: 0; padding: 0 3px 0 0; margin: 0; text-align: right; font: 10px "Noto Sans", sans-serif; color: #222; background: #fff; }

.tabs { display: flex; height: 22px; margin-top: 1px; padding: 0 6px; background: #f0f0f0; border-top: 2px solid #666; color: #888; align-items: flex-start; }
.tabs > button { height: 16px; padding: 0 10px; position: relative; line-height: 14px; }
.tabs > button:not(.active)::after { content: ""; position: absolute; right: 0; top: 2px; height: 11px; border-right: 1px solid #888; }
.tabs > .active { background: #fff; color: #111; border: 1px solid #333; border-top: 0; }
.tab-scroll { margin-left: auto; display: flex; gap: 10px; padding-top: 3px; }
.tab-scroll svg { width: 6px; height: 8px; display: block; }

.terminal { display: flex; flex: 1; }
.dock { width: 14px; display: flex; flex-direction: column; overflow: hidden; }
.dock > button { height: 13px; display: flex; align-items: center; justify-content: center; }
.dock > button svg { width: 6px; height: 6px; }
.dock-label { flex: 1; position: relative; background: #cfdff0; overflow: hidden; }
.dock-label span { position: absolute; top: 20px; left: 0; writing-mode: vertical-rl; rotate: 180deg; white-space: nowrap; font: 10px/13px "Noto Sans CJK JP", sans-serif; color: #222; }
.history { flex: 1; display: flex; border-top: 1px solid #999; padding-right: 3px; min-width: 0; }
table { flex: 1; table-layout: fixed; border-collapse: separate; border-spacing: 0; background: #fff; width: 100%; height: 57px; }
th, td { padding: 0 3px; text-align: right; white-space: nowrap; font-weight: 400; line-height: 14px; border-right: 1px solid #dcdcdc; overflow: hidden; font-family: "Noto Sans CJK JP", sans-serif; }
th { height: 23px; padding: 0 6px; border-bottom: 1px solid #bbb; color: #000; font-feature-settings: "palt"; }
td { height: 17px; background: #e9e9e9; }
th:first-child, td:first-child { text-align: left; }
td:first-child { padding-left: 2px; }
.sort { margin: 0 6px 0 10px; color: #777; }
td.profit { background: #60f060; }
.total td { background: #c8c8c8; font-weight: 700; border: 0; }
.deal-icon { width: 13px; height: 13px; vertical-align: -3px; margin-right: 5px; }
.scrollbar { width: 15px; display: flex; flex-direction: column; align-items: center; justify-content: space-between; background: #f0f0f0; padding: 3px 0; }
.scrollbar svg { width: 8px; height: 8px; display: block; }
.thumb { width: 13px; height: 15px; background: #cdcdcd; margin-top: 12px; }
</style>
